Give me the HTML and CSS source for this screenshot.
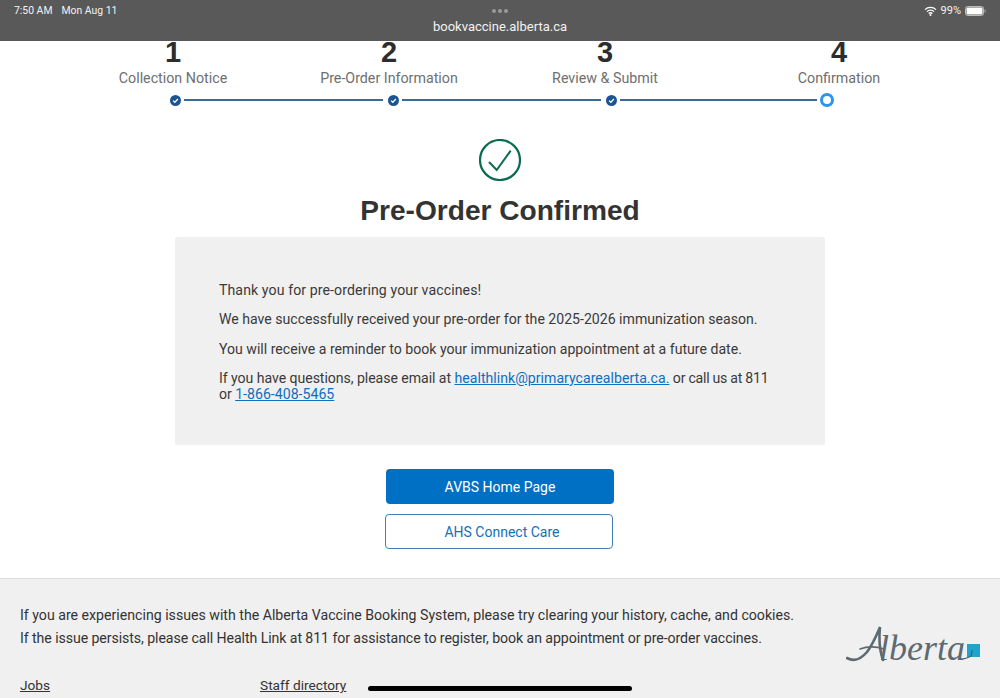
FILE: index.html
```html
<!DOCTYPE html>
<html lang="en">
<head>
<meta charset="utf-8">
<title>Pre-Order Confirmed</title>
<link rel="stylesheet" href="styles.css">
</head>
<body>
<header class="statusbar">
  <div class="status-row">
    <div class="status-left"><span>7:50 AM</span><span>Mon Aug 11</span></div>
    <div class="status-dots"><i></i><i></i><i></i></div>
    <div class="status-right">
      <svg class="wifi" width="13" height="10" viewBox="0 0 13 10"><path d="M1 3.6a7.8 7.8 0 0 1 11 0M2.9 5.6a5 5 0 0 1 7.2 0M4.7 7.5a2.5 2.5 0 0 1 3.6 0" fill="none" stroke="#fff" stroke-width="1.3"/><circle cx="6.5" cy="8.9" r="1" fill="#fff"/></svg>
      <span class="battery-pct">99%</span>
      <svg width="21" height="10" viewBox="0 0 21 10"><rect x=".5" y=".5" width="18" height="9" rx="2" fill="none" stroke="#bbb"/><rect x="1.5" y="1.5" width="16" height="7" rx="1" fill="#fff"/><rect x="19.5" y="3.5" width="1" height="3" fill="#aaa"/></svg>
    </div>
  </div>
  <div class="url">bookvaccine.alberta.ca</div>
</header>

<main>
  <section class="stepper">
    <div class="steps">
      <div class="step"><b>1</b><span>Collection Notice</span></div>
      <div class="step"><b>2</b><span>Pre-Order Information</span></div>
      <div class="step"><b>3</b><span>Review &amp; Submit</span></div>
      <div class="step"><b>4</b><span>Confirmation</span></div>
    </div>
    <div class="track">
      <svg class="dot" width="11" height="11" viewBox="0 0 12 12"><circle cx="6" cy="6" r="6" fill="#1b5490"/><path d="M3.4 6.1l1.9 1.8 3.3-3.5" fill="none" stroke="#fff" stroke-width="1.4"/></svg>
      <div class="line"></div>
      <svg class="dot" width="11" height="11" viewBox="0 0 12 12"><circle cx="6" cy="6" r="6" fill="#1b5490"/><path d="M3.4 6.1l1.9 1.8 3.3-3.5" fill="none" stroke="#fff" stroke-width="1.4"/></svg>
      <div class="line"></div>
      <svg class="dot" width="11" height="11" viewBox="0 0 12 12"><circle cx="6" cy="6" r="6" fill="#1b5490"/><path d="M3.4 6.1l1.9 1.8 3.3-3.5" fill="none" stroke="#fff" stroke-width="1.4"/></svg>
      <div class="line line-last"></div>
      <div class="dot-current"></div>
    </div>
  </section>

  <section class="confirm">
    <svg class="check" width="42" height="42" viewBox="0 0 42 42"><circle cx="21" cy="21" r="20" fill="none" stroke="#0a6b50" stroke-width="2.2"/><path d="M10 23l7.700 8 14-19.300" fill="none" stroke="#0a6b50" stroke-width="2"/></svg>
    <h1>Pre-Order Confirmed</h1>
    <div class="panel">
      <p class="wide">Thank you for pre-ordering your vaccines!</p>
      <p>We have successfully received your pre-order for the 2025-2026 immunization season.</p>
      <p>You will receive a reminder to book your immunization appointment at a future date.</p>
      <p class="tight">If you have questions, please email at <a href="#">healthlink@primarycarealberta.ca.</a> <span class="after">or call us at 811</span><br>or <a href="#">1-866-408-5465</a></p>
    </div>
    <div class="actions">
      <a class="btn primary" href="#">AVBS Home Page</a>
      <a class="btn outline" href="#">AHS Connect Care</a>
    </div>
  </section>
</main>

<footer class="footer">
  <div class="footer-top">
    <div class="footer-text">
      <p>If you are experiencing issues with the Alberta Vaccine Booking System, please try clearing your history, cache, and cookies.</p>
      <p class="second">If the issue persists, please call Health Link at 811 for assistance to register, book an appointment or pre-order vaccines.</p>
    </div>
    <svg class="logo" width="136" height="50" viewBox="0 0 136 50" role="img" aria-label="Alberta">
      <path d="M1 37c7 4 14 1 20-6 6-8 10-18 13-25-1 10-1 22 3 33" fill="none" stroke="#5d6a72" stroke-width="2.6" stroke-linecap="round"/>
      <path d="M14 28c8-3 15-3 24 0" fill="none" stroke="#5d6a72" stroke-width="1.6" stroke-linecap="round"/>
      <text class="logo-word" x="33" y="39">lberta</text>
      <rect x="121" y="23" width="13" height="13" fill="#1fa3cf"/>
      <path d="M114 38c4 0 8-1 11-3 1-2 1-4 1-6" fill="none" stroke="#47606c" stroke-width="1.2"/>
    </svg>
  </div>
  <nav class="footer-links"><a href="#">Jobs</a><a href="#">Staff directory</a></nav>
</footer>
<div class="home-bar"></div>
</body>
</html>
```
FILE: styles.css
```css
* { box-sizing: border-box; }
html, body { margin: 0; height: 698px; overflow: hidden; }
body { position: relative; background: #fff; font-family: Roboto, "Liberation Sans", sans-serif; color: #333; }

.statusbar { height: 41px; background: #595959; color: #f2f2f2; padding-top: 4px; }
.status-row { display: grid; grid-template-columns: 1fr auto 1fr; align-items: center; height: 12px; padding: 0 14px; font-size: 10.4px; }
.status-left { display: flex; gap: 9px; }
.status-dots { display: flex; gap: 2px; }
.status-dots i { width: 4px; height: 4px; border-radius: 50%; background: #9a9a9a; }
.status-right { display: flex; justify-content: flex-end; align-items: center; gap: 4px; }
.battery-pct { font-size: 11px; }
.url { text-align: center; font-size: 13px; line-height: 16px; margin-top: 3px; }

.stepper { height: 70px; }
.steps { display: grid; grid-template-columns: 216px 216px 216px 252px; padding-left: 65px; }
.step { display: flex; flex-direction: column; align-items: center; }
.step b { font-size: 29px; line-height: 22px; height: 21px; font-family: "Liberation Sans", sans-serif; color: #2d2d2d; font-weight: 700; }
.step span { font-size: 14.25px; line-height: 17px; margin-top: 8px; color: #6f6f6f; }
.track { display: flex; align-items: center; margin-top: 6px; padding-left: 170px; }
.dot { flex: none; }
.line { flex: none; width: 199px; height: 2px; background: #3d6a94; margin: 0 5px 0 3px; }
.line-last { width: 197px; margin-right: 3px; }
.dot-current { flex: none; width: 14px; height: 14px; border-radius: 50%; border: 3.5px solid #2a94f0; background: #fff; }

.confirm { display: flex; flex-direction: column; align-items: center; padding-top: 28px; }
.check { display: block; }
h1 { margin: 13px 0 0; font-family: "Liberation Sans", sans-serif; font-size: 28.1px; line-height: 34px; font-weight: 700; color: #333; }
.panel { width: 650px; height: 208px; margin-top: 9px; background: #f0f0f0; border-radius: 2px; padding: 45px 44px 0; font-size: 14.1px; line-height: 16px; color: #3a3a3a; }
.panel p { margin: 0 0 13.300px; }
.panel .wide { letter-spacing: .1px; }
.panel .tight { letter-spacing: -.05px; }
.panel a { color: #0d6fc0; text-decoration: underline; letter-spacing: .02px; }
.panel .after { letter-spacing: -.25px; }
.actions { display: flex; flex-direction: column; align-items: center; gap: 10px; margin-top: 24px; }
.btn { display: flex; align-items: center; justify-content: center; width: 228px; height: 35px; padding-top: 1px; border-radius: 4px; font-size: 14px; text-decoration: none; }
.primary { background: #0070c4; color: #fff; }
.outline { background: #fff; color: #1470bb; border: 1px solid #3f7fb5; margin-right: 2px; padding-left: 6px; }

.footer { position: absolute; left: 0; right: 0; top: 578px; height: 120px; background: #f0f0f0; border-top: 1px solid #ddd; padding: 28px 20px 0; font-size: 14.15px; color: #333; }
.footer-top { display: flex; justify-content: space-between; height: 61px; }
.footer-text p { margin: 0 0 7px; line-height: 16px; }
.footer-text .second { letter-spacing: -.08px; }
.logo { flex: none; margin: 14px -2px 0 0; }
.logo-word { font-family: "Liberation Serif", serif; font-style: italic; font-size: 36px; fill: #5d6a72; }
.footer-links { display: flex; margin-top: 9px; font-size: 13.7px; }
.footer-links a { color: #333; width: 240px; line-height: 16px; }
.home-bar { position: absolute; left: 368px; top: 686px; width: 264px; height: 5px; border-radius: 3px; background: #000; }
```
